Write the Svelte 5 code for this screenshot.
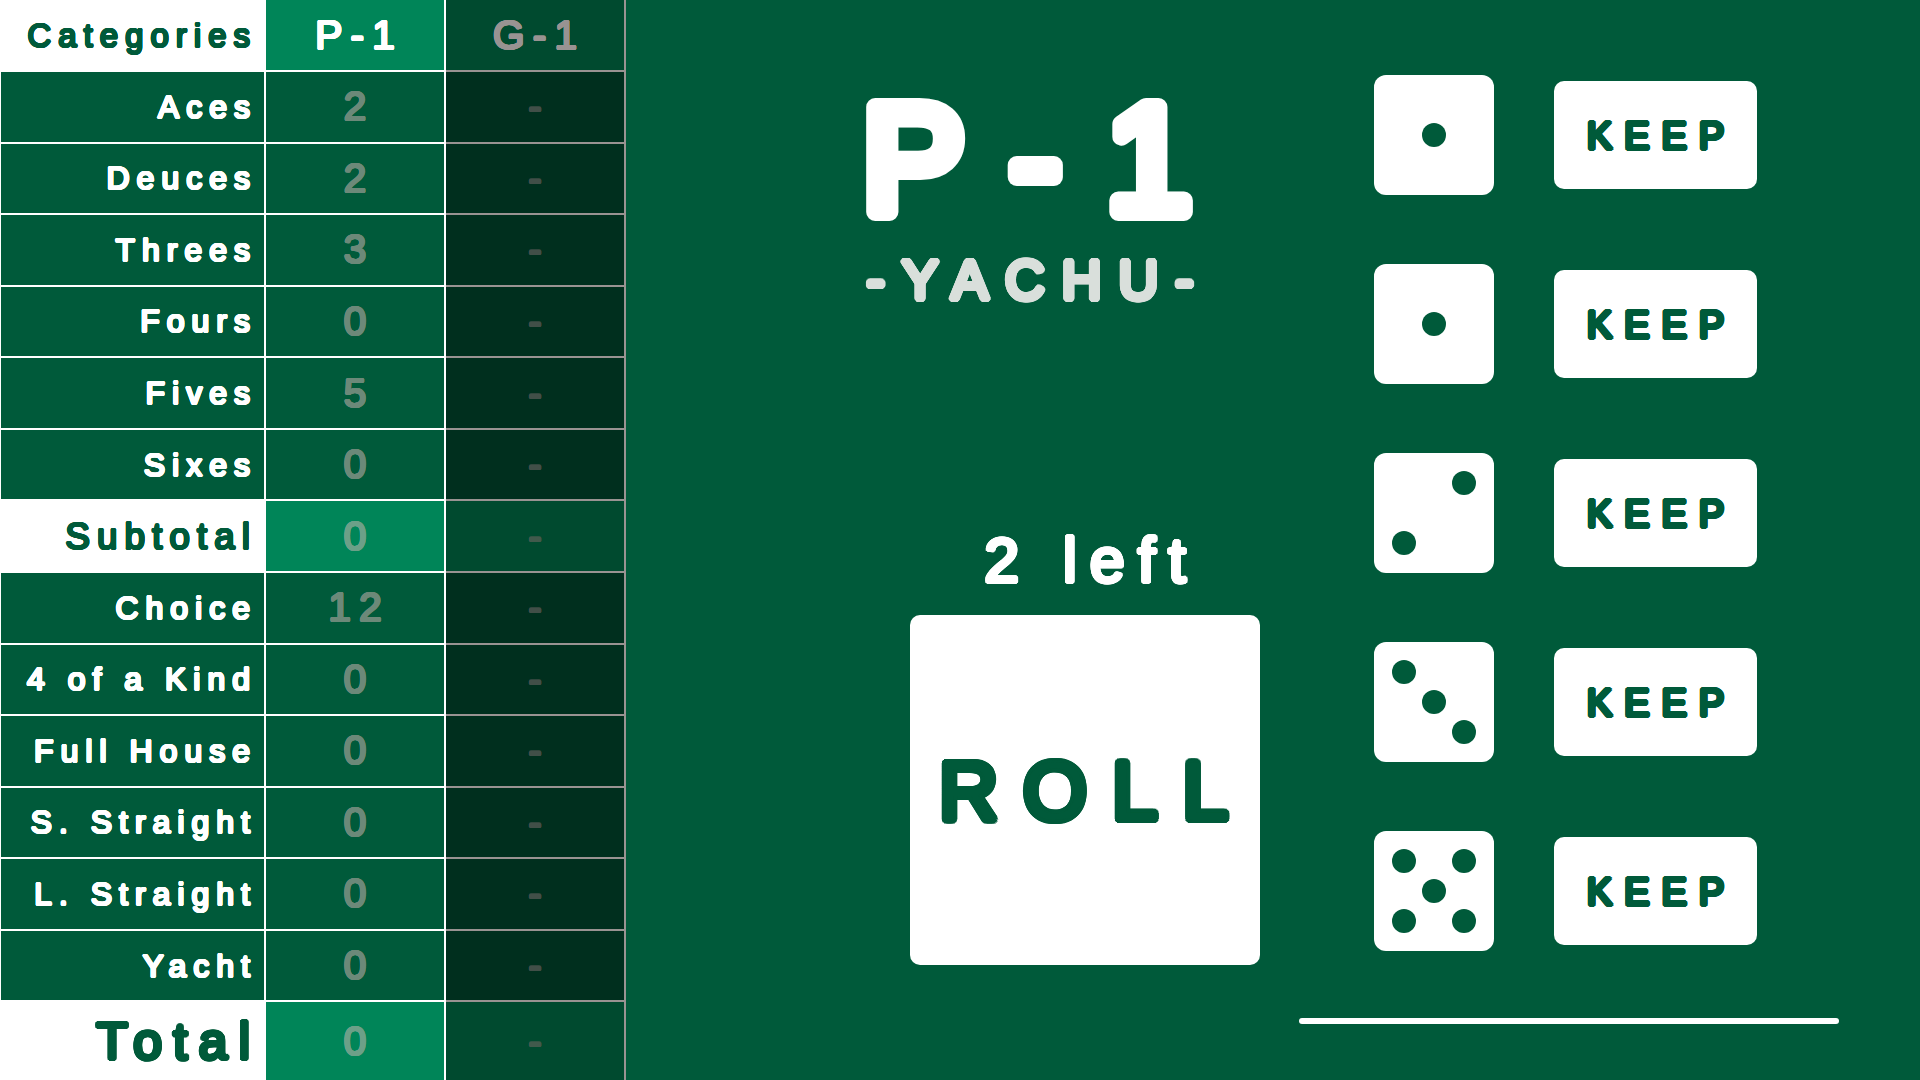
<script lang="ts">
  type Row = { label: string; score: string; kind?: string };

  const rows: Row[] = [
    { label: 'Aces', score: '2' },
    { label: 'Deuces', score: '2' },
    { label: 'Threes', score: '3' },
    { label: 'Fours', score: '0' },
    { label: 'Fives', score: '5' },
    { label: 'Sixes', score: '0' },
    { label: 'Subtotal', score: '0', kind: 'subtotal' },
    { label: 'Choice', score: '12' },
    { label: '4 of a Kind', score: '0' },
    { label: 'Full House', score: '0' },
    { label: 'S. Straight', score: '0' },
    { label: 'L. Straight', score: '0' },
    { label: 'Yacht', score: '0' },
    { label: 'Total', score: '0', kind: 'total' }
  ];

  // pip centres on a 120 x 120 face
  const pips: Record<number, number[][]> = {
    1: [[60, 60]],
    2: [[90, 30], [30, 90]],
    3: [[30, 30], [60, 60], [90, 90]],
    4: [[30, 30], [90, 30], [30, 90], [90, 90]],
    5: [[30, 30], [90, 30], [60, 60], [30, 90], [90, 90]],
    6: [[30, 30], [90, 30], [30, 60], [90, 60], [30, 90], [90, 90]]
  };

  let dice = $state([1, 1, 2, 3, 5]);
  let kept = $state([false, false, false, false, false]);
  let left = $state(2);

  function roll() {
    if (left === 0) return;
    dice = dice.map((d, i) => (kept[i] ? d : 1 + Math.floor(Math.random() * 6)));
    left -= 1;
  }
</script>

<main class="game">
  <table class="scores">
    <thead>
      <tr>
        <th class="label head" scope="col">Categories</th>
        <th class="player" scope="col">P-1</th>
        <th class="player guest" scope="col">G-1</th>
      </tr>
    </thead>
    <tbody>
      {#each rows as row}
        <tr class={row.kind}>
          <th class="label" scope="row">{row.label}</th>
          <td>{row.score}</td>
          <td class="guest">-</td>
        </tr>
      {/each}
    </tbody>
  </table>

  <section class="play">
    <header class="turn">
      <h1>
        <svg class="name" viewBox="0 0 440 152">
          <text x="240" y="128" text-anchor="middle">P-1</text>
        </svg>
      </h1>
      <p class="hand">-YACHU-</p>
    </header>
    <div class="roll-area">
      <p class="left">{left} left</p>
      <button class="roll" onclick={roll}>ROLL</button>
    </div>
  </section>

  <section class="dice">
    {#each dice as die, i}
      <div class="die-row">
        <svg class="die" viewBox="0 0 120 120" role="img" aria-label={`Die ${i + 1}: ${die}`}>
          <rect width="120" height="120" rx="12" />
          {#each pips[die] as [cx, cy]}
            <circle {cx} {cy} r="12" />
          {/each}
        </svg>
        <button class="keep" aria-pressed={kept[i]} onclick={() => (kept[i] = !kept[i])}>KEEP</button>
      </div>
    {/each}
    <hr />
  </section>
</main>

<style>
  :global(body) {
    margin: 0;
    background: #005a3a;
  }

  .game {
    display: flex;
    min-height: 100vh;
    background: #005a3a;
    color: #fff;
    font-family: 'Liberation Sans', Arial, sans-serif;
  }

  /* rounded outline: a ring of shadows, --r is its radius */
  th,
  td,
  .hand,
  .left,
  button {
    --a: calc(var(--r) * 0.924);
    --b: calc(var(--r) * 0.707);
    --c: calc(var(--r) * 0.383);
    text-shadow:
      var(--r) 0,
      var(--a) var(--c),
      var(--b) var(--b),
      var(--c) var(--a),
      0 var(--r),
      calc(-1 * var(--c)) var(--a),
      calc(-1 * var(--b)) var(--b),
      calc(-1 * var(--a)) var(--c),
      calc(-1 * var(--r)) 0,
      calc(-1 * var(--a)) calc(-1 * var(--c)),
      calc(-1 * var(--b)) calc(-1 * var(--b)),
      calc(-1 * var(--c)) calc(-1 * var(--a)),
      0 calc(-1 * var(--r)),
      var(--c) calc(-1 * var(--a)),
      var(--b) calc(-1 * var(--b)),
      var(--a) calc(-1 * var(--c));
  }

  .scores {
    width: 626px;
    height: 100vh;
    flex: none;
    table-layout: fixed;
    border-collapse: separate;
    border-spacing: 0;
  }

  th,
  td {
    --r: 1px;
    box-sizing: border-box;
    width: 180px;
    height: 71px;
    padding: 0 0 0 8px;
    border: solid #fff;
    border-width: 0 2px 2px 0;
    color: #6c8979;
    font-size: 41px;
    font-weight: 400;
    line-height: 1;
    letter-spacing: 8px;
    text-align: center;
    white-space: nowrap;
    -webkit-text-stroke: 1px;
  }

  .label {
    width: 266px;
    padding: 0 7px 0 0;
    border-left-width: 1px;
    color: #fff;
    font-size: 32px;
    letter-spacing: 7px;
    text-align: right;
    -webkit-text-stroke: 0;
  }

  thead th {
    height: 72px;
  }

  .head {
    background: #fff;
    color: #005a3a;
    font-size: 33px;
  }

  .player {
    background: #008558;
    color: #fff;
  }

  .guest {
    background: #002f1e;
    border-color: #999392;
    color: #414f48;
  }

  .player.guest {
    background: #004a2f;
    color: #999392;
  }

  .subtotal .label,
  .total .label {
    background: #fff;
    color: #005a3a;
  }

  .subtotal .label {
    font-size: 37px;
  }

  .total .label {
    --r: 2px;
    padding-right: 3px;
    font-size: 52px;
    letter-spacing: 11px;
  }

  .subtotal td,
  .total td {
    background: #008558;
    color: #6ca088;
  }

  .subtotal .guest,
  .total .guest {
    background: #004a2f;
    color: #415a4c;
  }

  .total th,
  .total td {
    height: 77px;
    border-bottom-width: 0;
  }

  .play {
    flex: 1;
    display: flex;
    flex-direction: column;
    justify-content: space-between;
    align-items: flex-end;
    padding: 84px 39px 115px 0;
  }

  .turn {
    width: 440px;
    margin-right: 10px;
    text-align: center;
  }

  h1 {
    margin: 0;
    font-size: 152px;
    font-weight: 400;
    letter-spacing: 46px;
  }

  .name {
    display: block;
    width: 100%;
    overflow: visible;
    fill: #fff;
    stroke: #fff;
    stroke-width: 18px;
    stroke-linejoin: round;
  }

  .hand {
    --r: 3px;
    margin: 14px 0 0;
    padding-left: 17px;
    color: #d9dfdb;
    font-size: 55px;
    line-height: 60px;
    letter-spacing: 17px;
  }

  .roll-area {
    width: 350px;
  }

  .left {
    --r: 2px;
    margin: 0 0 19px;
    padding-left: 13px;
    font-size: 63px;
    line-height: 72px;
    letter-spacing: 13px;
    text-align: center;
  }

  button {
    border: 0;
    border-radius: 10px;
    background: #fff;
    color: #005a3a;
    font-family: inherit;
    cursor: pointer;
  }

  .roll {
    --r: 4px;
    display: block;
    width: 350px;
    height: 350px;
    padding: 2px 0 0 22px;
    font-size: 82px;
    letter-spacing: 25px;
  }

  .dice {
    flex: none;
    display: flex;
    flex-direction: column;
    gap: 69px;
    width: 540px;
    padding: 75px 81px 0 0;
  }

  .die-row {
    display: flex;
    align-items: center;
    gap: 60px;
    padding-left: 75px;
  }

  .die {
    width: 120px;
    height: 120px;
    fill: #fff;
  }

  .die circle {
    fill: #005a3a;
  }

  .keep {
    --r: 2px;
    width: 203px;
    height: 108px;
    padding: 2px 0 0 12px;
    font-size: 38px;
    letter-spacing: 12px;
  }

  .keep[aria-pressed='true'] {
    background: #d9dfdb;
  }

  hr {
    width: 100%;
    height: 6px;
    margin: -2px 0 0;
    border: 0;
    border-radius: 3px;
    background: #fff;
  }
</style>
